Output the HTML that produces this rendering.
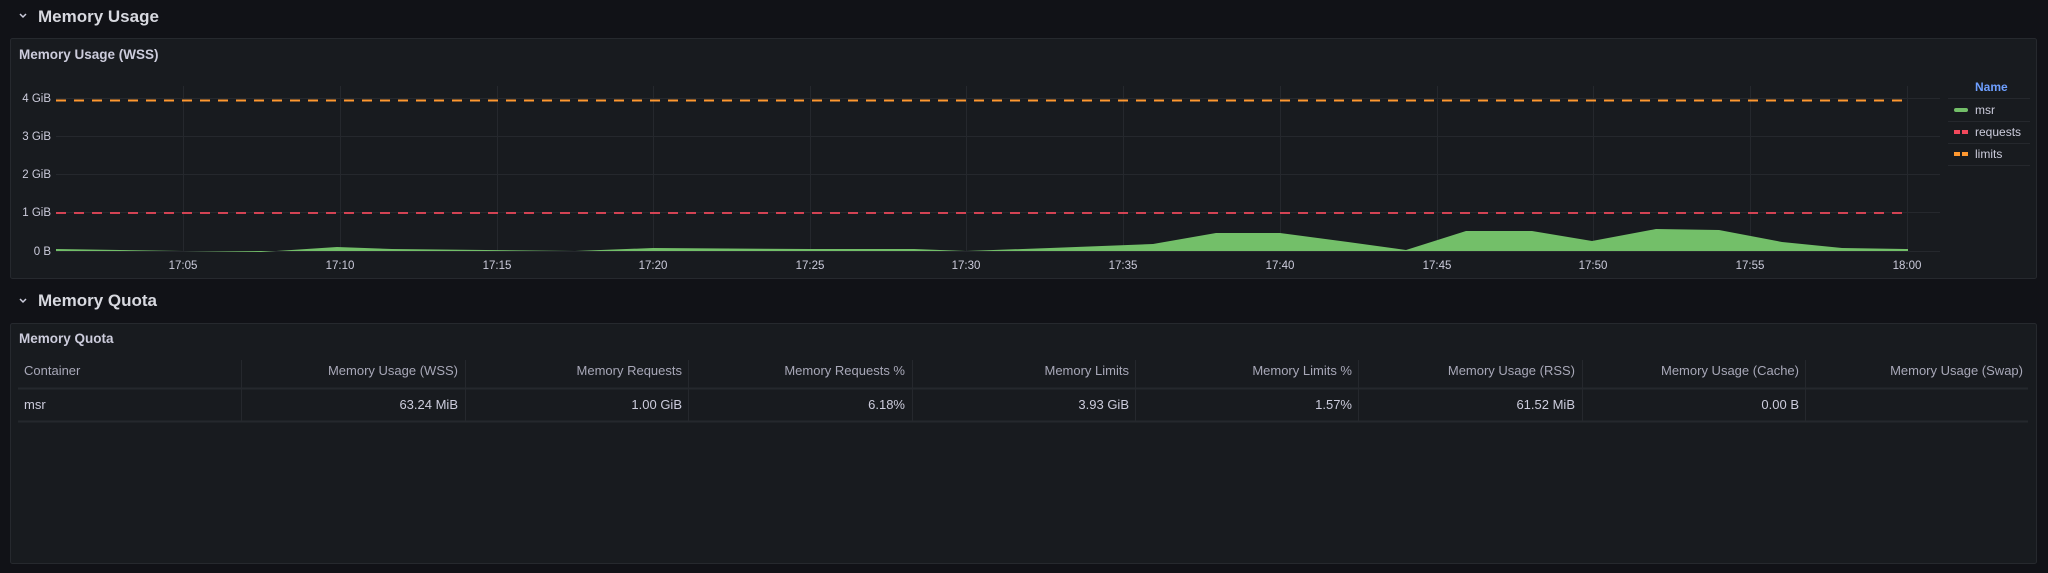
<!DOCTYPE html>
<html><head><meta charset="utf-8"><style>
html,body{margin:0;padding:0;background:#111217;}
svg{display:block;}
text{font-family:"Liberation Sans",sans-serif;fill:#ccccdc;}
</style></head><body>
<svg width="2048" height="573" viewBox="0 0 2048 573" xmlns="http://www.w3.org/2000/svg">
<rect width="2048" height="573" fill="#111217"/>
<path d="M20 14 L23 17 L26 14" stroke="#ccccdc" stroke-width="1.5" fill="none"/>
<text x="38" y="22" font-size="17" font-weight="bold" style="fill:#d8d9e0">Memory Usage</text>
<rect x="10.5" y="38.5" width="2026" height="240" rx="2" fill="#181b1f" stroke="#26292e"/>
<text x="19" y="59" font-size="13.5" font-weight="bold">Memory Usage (WSS)</text>
<g stroke="#25282d" stroke-width="1">
<line x1="56" y1="98.5" x2="1940" y2="98.5"/>
<line x1="56" y1="136.5" x2="1940" y2="136.5"/>
<line x1="56" y1="174.5" x2="1940" y2="174.5"/>
<line x1="56" y1="212.5" x2="1940" y2="212.5"/>
<line x1="56" y1="251.5" x2="1940" y2="251.5"/>
<line x1="183.5" y1="86" x2="183.5" y2="251"/>
<line x1="340.5" y1="86" x2="340.5" y2="251"/>
<line x1="497.5" y1="86" x2="497.5" y2="251"/>
<line x1="653.5" y1="86" x2="653.5" y2="251"/>
<line x1="810.5" y1="86" x2="810.5" y2="251"/>
<line x1="966.5" y1="86" x2="966.5" y2="251"/>
<line x1="1123.5" y1="86" x2="1123.5" y2="251"/>
<line x1="1280.5" y1="86" x2="1280.5" y2="251"/>
<line x1="1437.5" y1="86" x2="1437.5" y2="251"/>
<line x1="1593.5" y1="86" x2="1593.5" y2="251"/>
<line x1="1750.5" y1="86" x2="1750.5" y2="251"/>
<line x1="1907.5" y1="86" x2="1907.5" y2="251"/>
</g>
<g font-size="11.5" text-anchor="end">
<text x="51" y="102">4 GiB</text>
<text x="51" y="140">3 GiB</text>
<text x="51" y="178">2 GiB</text>
<text x="51" y="216">1 GiB</text>
<text x="51" y="255">0 B</text>
</g>
<g font-size="11.5" text-anchor="middle">
<text x="183" y="269">17:05</text>
<text x="340" y="269">17:10</text>
<text x="497" y="269">17:15</text>
<text x="653" y="269">17:20</text>
<text x="810" y="269">17:25</text>
<text x="966" y="269">17:30</text>
<text x="1123" y="269">17:35</text>
<text x="1280" y="269">17:40</text>
<text x="1437" y="269">17:45</text>
<text x="1593" y="269">17:50</text>
<text x="1750" y="269">17:55</text>
<text x="1907" y="269">18:00</text>
</g>
<path d="M56 251 L56 249 L183 251 L261 252 L337 247 L392 249 L575 251 L653 248 L810 249 L914 249 L966 251 L1050 248 L1153 244 L1216 233 L1280 233 L1348 242 L1406 250 L1466 231 L1532 231 L1592 241 L1656 229 L1719 230 L1782 242 L1842 248 L1908 249 L1908 251 Z" fill="#73bf69"/>
<line x1="56" y1="100.5" x2="1907" y2="100.5" stroke="#ff9830" stroke-width="2" stroke-dasharray="10 8"/>
<line x1="56" y1="213" x2="1907" y2="213" stroke="#f2495c" stroke-width="2" stroke-dasharray="10 8" opacity="0.85"/>
<text x="1975" y="91" font-size="12" font-weight="bold" style="fill:#6e9fff">Name</text>
<g stroke="#25282d"><line x1="1948" y1="98.5" x2="2030" y2="98.5"/><line x1="1948" y1="121.5" x2="2030" y2="121.5"/><line x1="1948" y1="143.5" x2="2030" y2="143.5"/><line x1="1948" y1="165.5" x2="2030" y2="165.5"/></g>
<rect x="1954" y="108" width="14" height="4" rx="2" fill="#73bf69"/>
<rect x="1954" y="130" width="6" height="4" fill="#f2495c"/><rect x="1962" y="130" width="6" height="4" fill="#f2495c"/>
<rect x="1954" y="152" width="6" height="4" fill="#ff9830"/><rect x="1962" y="152" width="6" height="4" fill="#ff9830"/>
<g font-size="12"><text x="1975" y="114">msr</text><text x="1975" y="136">requests</text><text x="1975" y="158">limits</text></g>
<path d="M20 299 L23 302 L26 299" stroke="#ccccdc" stroke-width="1.5" fill="none"/>
<text x="38" y="306" font-size="17" font-weight="bold" style="fill:#d8d9e0">Memory Quota</text>
<rect x="10.5" y="323.5" width="2026" height="240" rx="2" fill="#181b1f" stroke="#26292e"/>
<text x="19" y="343" font-size="13.5" font-weight="bold">Memory Quota</text>
<g stroke="#25282d"><line x1="18" y1="388.5" x2="2028" y2="388.5" stroke-width="2"/><line x1="18" y1="421.5" x2="2028" y2="421.5" stroke-width="2"/>
<line x1="241.5" y1="360" x2="241.5" y2="421"/><line x1="465.5" y1="360" x2="465.5" y2="421"/><line x1="688.5" y1="360" x2="688.5" y2="421"/><line x1="912.5" y1="360" x2="912.5" y2="421"/><line x1="1135.5" y1="360" x2="1135.5" y2="421"/><line x1="1358.5" y1="360" x2="1358.5" y2="421"/><line x1="1582.5" y1="360" x2="1582.5" y2="421"/><line x1="1805.5" y1="360" x2="1805.5" y2="421"/></g>
<g font-size="13">
<text x="24" y="375" style="fill:#a8a8b8">Container</text>
<g text-anchor="end">
<text x="458" y="375" style="fill:#a8a8b8">Memory Usage (WSS)</text>
<text x="682" y="375" style="fill:#a8a8b8">Memory Requests</text>
<text x="905" y="375" style="fill:#a8a8b8">Memory Requests %</text>
<text x="1129" y="375" style="fill:#a8a8b8">Memory Limits</text>
<text x="1352" y="375" style="fill:#a8a8b8">Memory Limits %</text>
<text x="1575" y="375" style="fill:#a8a8b8">Memory Usage (RSS)</text>
<text x="1799" y="375" style="fill:#a8a8b8">Memory Usage (Cache)</text>
<text x="2023" y="375" style="fill:#a8a8b8">Memory Usage (Swap)</text>
</g></g>
<g font-size="13">
<text x="24" y="409">msr</text>
<g text-anchor="end">
<text x="458" y="409">63.24 MiB</text>
<text x="682" y="409">1.00 GiB</text>
<text x="905" y="409">6.18%</text>
<text x="1129" y="409">3.93 GiB</text>
<text x="1352" y="409">1.57%</text>
<text x="1575" y="409">61.52 MiB</text>
<text x="1799" y="409">0.00 B</text>
</g></g>
</svg>
</body></html>
